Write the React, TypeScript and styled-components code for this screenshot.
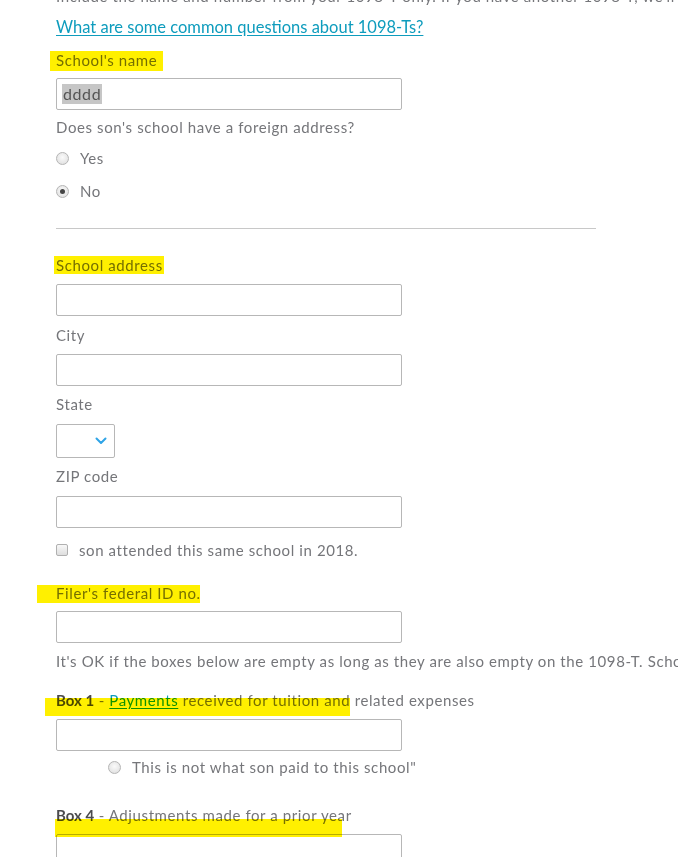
import styled, { createGlobalStyle } from "styled-components";

const Global = createGlobalStyle`
  html, body {
    margin: 0;
    padding: 0;
    background: #fff;
    overflow: hidden;
  }
  body {
    font-family: Lato, "Open Sans", "Liberation Sans", sans-serif;
    color: #75767a;
    letter-spacing: 0.6px;
  }
`;

const Page = styled.div`
  display: flex;
  flex-direction: column;
  align-items: flex-start;
  padding-left: 56px;
  margin-top: -14px;
  width: 622px;
`;

const Text = styled.div<{ $mt?: number }>`
  margin-top: ${(p) => p.$mt ?? 0}px;
  font-size: 15px;
  line-height: 20px;
  white-space: nowrap;
`;

const HelpLink = styled.a`
  margin-top: 10px;
  font-size: 16.5px;
  line-height: 22px;
  letter-spacing: 0;
  color: #0e9cbd;
  text-decoration: underline;
  text-underline-offset: 2px;
  cursor: pointer;
`;

const Label = styled.div<{ $mt: number }>`
  position: relative;
  margin-top: ${(p) => p.$mt}px;
  font-size: 15px;
  line-height: 20px;
  white-space: nowrap;
`;

const Marker = styled.span<{ $l: number; $t: number; $w: number; $h: number }>`
  position: absolute;
  left: ${(p) => p.$l}px;
  top: ${(p) => p.$t}px;
  width: ${(p) => p.$w}px;
  height: ${(p) => p.$h}px;
  background: #fff000;
  mix-blend-mode: multiply;
  pointer-events: none;
`;

const Field = styled.div<{ $mt: number }>`
  box-sizing: border-box;
  margin-top: ${(p) => p.$mt}px;
  width: 346px;
  height: 32px;
  border: 1px solid #b7b7b7;
  border-radius: 2px;
  background: #fff;
  display: flex;
  align-items: center;
  padding-left: 5px;
  font-size: 16px;
  color: #555;
`;

const Selected = styled.span`
  background: #c6c6c6;
  line-height: 20px;
  padding: 0 1px;
`;

const Choice = styled.div<{ $mt: number; $indent?: number }>`
  display: flex;
  align-items: center;
  gap: 11px;
  margin-top: ${(p) => p.$mt}px;
  margin-left: ${(p) => p.$indent ?? 0}px;
  height: 20px;
  font-size: 15px;
  white-space: nowrap;
`;

const Radio = styled.span<{ $on?: boolean }>`
  box-sizing: border-box;
  width: 13px;
  height: 13px;
  border-radius: 50%;
  border: 1px solid #b5b5b5;
  background: radial-gradient(circle at 50% 40%, #fafafa, #dcdcdc);
  display: flex;
  align-items: center;
  justify-content: center;
  &::after {
    content: "";
    display: ${(p) => (p.$on ? "block" : "none")};
    width: 5px;
    height: 5px;
    border-radius: 50%;
    background: #444;
  }
`;

const Check = styled.span`
  box-sizing: border-box;
  width: 12px;
  height: 12px;
  border-radius: 2px;
  border: 1px solid #b0b0b0;
  background: linear-gradient(#f8f8f8, #dedede);
`;

const Divider = styled.div`
  margin-top: 27px;
  width: 540px;
  height: 1px;
  background: #c8c8c8;
`;

const Select = styled.div`
  box-sizing: border-box;
  margin-top: 10px;
  width: 59px;
  height: 34px;
  border: 1px solid #b7b7b7;
  border-radius: 2px;
  display: flex;
  align-items: center;
  justify-content: flex-end;
  padding-right: 7px;
`;

const Bold = styled.b`
  color: #4b4b4d;
  font-weight: 700;
  letter-spacing: 0;
`;

const InlineLink = styled.a`
  color: #0e9cbd;
  text-decoration: underline;
  text-underline-offset: 2px;
`;

const Chevron = () => (
  <svg width="12" height="8" viewBox="0 0 12 8" fill="none">
    <path d="M1.5 1.5 L6 6 L10.5 1.5" stroke="#2fa4e7" strokeWidth="2" strokeLinecap="round" strokeLinejoin="round" />
  </svg>
);

export default function App() {
  return (
    <>
      <Global />
      <Page>
        <Text>
          Include the name and number from your 1098-T only. If you have another 1098-T, we'll enter it later.
        </Text>
        <HelpLink>What are some common questions about 1098-Ts?</HelpLink>

        <Label $mt={12}>
          <Marker $l={-6} $t={1} $w={113} $h={20} />
          School's name
        </Label>
        <Field $mt={8}>
          <Selected>dddd</Selected>
        </Field>

        <Text $mt={7}>Does son's school have a foreign address?</Text>
        <Choice $mt={11}>
          <Radio />
          Yes
        </Choice>
        <Choice $mt={13}>
          <Radio $on />
          No
        </Choice>

        <Divider />

        <Label $mt={26}>
          <Marker $l={-2} $t={1} $w={110} $h={18} />
          School address
        </Label>
        <Field $mt={9} />

        <Text $mt={9}>City</Text>
        <Field $mt={9} />

        <Text $mt={8}>State</Text>
        <Select>
          <Chevron />
        </Select>

        <Text $mt={8}>ZIP code</Text>
        <Field $mt={10} />

        <Choice $mt={12}>
          <Check />
          son attended this same school in 2018.
        </Choice>

        <Label $mt={23}>
          <Marker $l={-19} $t={2} $w={163} $h={18} />
          Filer's federal ID no.
        </Label>
        <Field $mt={8} />

        <Text $mt={8}>
          It's OK if the boxes below are empty as long as they are also empty on the 1098-T. School's name is required.
        </Text>

        <Label $mt={19}>
          <Marker $l={-11} $t={8} $w={305} $h={18} />
          <Bold>Box 1</Bold> - <InlineLink>Payments</InlineLink> received for tuition and related expenses
        </Label>
        <Field $mt={9} />

        <Choice $mt={6} $indent={52}>
          <Radio />
          This is not what son paid to this school"
        </Choice>

        <Label $mt={28}>
          <Marker $l={-1} $t={14} $w={287} $h={18} />
          <Bold>Box 4</Bold> - Adjustments made for a prior year
        </Label>
        <Field $mt={9} />
      </Page>
    </>
  );
}
